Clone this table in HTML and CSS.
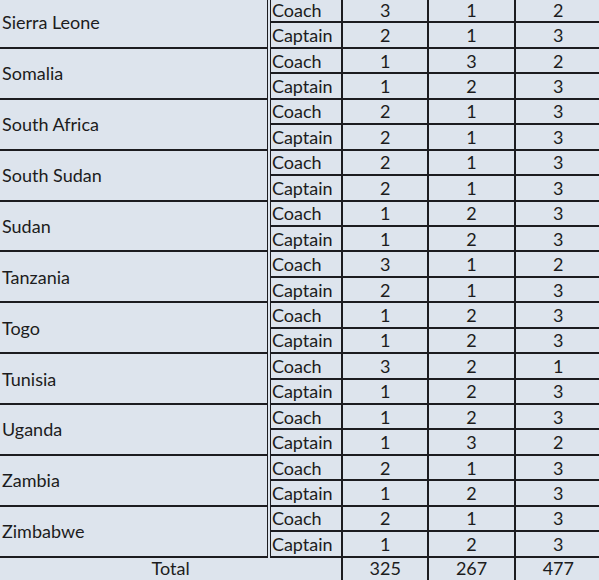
FILE: index.html
```html
<!DOCTYPE html>
<html>
<head>
<meta charset="utf-8">
<link rel="stylesheet" href="styles.css">
</head>
<body>
<table class="grid">
  <colgroup>
    <col class="c-country"><col class="c-role"><col class="c-num"><col class="c-num"><col class="c-num">
  </colgroup>
  <tbody>
    <tr class="coach"><td class="country" rowspan="2">Sierra Leone</td><td class="role">Coach</td><td>3</td><td>1</td><td>2</td></tr>
    <tr class="captain"><td class="role">Captain</td><td>2</td><td>1</td><td>3</td></tr>
    <tr class="coach"><td class="country" rowspan="2">Somalia</td><td class="role">Coach</td><td>1</td><td>3</td><td>2</td></tr>
    <tr class="captain"><td class="role">Captain</td><td>1</td><td>2</td><td>3</td></tr>
    <tr class="coach"><td class="country" rowspan="2">South Africa</td><td class="role">Coach</td><td>2</td><td>1</td><td>3</td></tr>
    <tr class="captain"><td class="role">Captain</td><td>2</td><td>1</td><td>3</td></tr>
    <tr class="coach"><td class="country" rowspan="2">South Sudan</td><td class="role">Coach</td><td>2</td><td>1</td><td>3</td></tr>
    <tr class="captain"><td class="role">Captain</td><td>2</td><td>1</td><td>3</td></tr>
    <tr class="coach"><td class="country" rowspan="2">Sudan</td><td class="role">Coach</td><td>1</td><td>2</td><td>3</td></tr>
    <tr class="captain"><td class="role">Captain</td><td>1</td><td>2</td><td>3</td></tr>
    <tr class="coach"><td class="country" rowspan="2">Tanzania</td><td class="role">Coach</td><td>3</td><td>1</td><td>2</td></tr>
    <tr class="captain"><td class="role">Captain</td><td>2</td><td>1</td><td>3</td></tr>
    <tr class="coach"><td class="country" rowspan="2">Togo</td><td class="role">Coach</td><td>1</td><td>2</td><td>3</td></tr>
    <tr class="captain"><td class="role">Captain</td><td>1</td><td>2</td><td>3</td></tr>
    <tr class="coach"><td class="country" rowspan="2">Tunisia</td><td class="role">Coach</td><td>3</td><td>2</td><td>1</td></tr>
    <tr class="captain"><td class="role">Captain</td><td>1</td><td>2</td><td>3</td></tr>
    <tr class="coach"><td class="country" rowspan="2">Uganda</td><td class="role">Coach</td><td>1</td><td>2</td><td>3</td></tr>
    <tr class="captain"><td class="role">Captain</td><td>1</td><td>3</td><td>2</td></tr>
    <tr class="coach"><td class="country" rowspan="2">Zambia</td><td class="role">Coach</td><td>2</td><td>1</td><td>3</td></tr>
    <tr class="captain"><td class="role">Captain</td><td>1</td><td>2</td><td>3</td></tr>
    <tr class="coach"><td class="country" rowspan="2">Zimbabwe</td><td class="role">Coach</td><td>2</td><td>1</td><td>3</td></tr>
    <tr class="captain"><td class="role">Captain</td><td>1</td><td>2</td><td>3</td></tr>
    <tr class="total"><td class="total-label" colspan="2">Total</td><td>325</td><td>267</td><td>477</td></tr>
  </tbody>
</table>
</body>
</html>
```
FILE: styles.css
```css
html, body {
  margin: 0;
  padding: 0;
  background: #dde4ed;
  overflow: hidden;
}

.grid {
  border-collapse: collapse;
  table-layout: fixed;
  width: 601px;
  margin-top: -2px;
  font-family: Lato, "Open Sans", sans-serif;
  font-size: 18px;
  color: #1c1c20;
}

.c-country { width: 268px; }
.c-role { width: 73px; }
.c-num { width: 86px; }

.grid td {
  padding: 0;
  height: 23.45px;
  line-height: 22px;
  text-align: center;
  border-bottom: 2px solid #1c1c20;
  border-left: 2px solid #1c1c20;
}

.grid td.country {
  text-align: left;
  padding-left: 2px;
  border-left: none;
  border-right: 4px double #1c1c20;
}

.grid td.role {
  text-align: left;
  padding-left: 1px;
}

.grid td.total-label {
  border-left: none;
  border-bottom: none;
}

.grid tr.total td {
  border-bottom: none;
  height: 22px;
  line-height: 20px;
  vertical-align: top;
}
```
